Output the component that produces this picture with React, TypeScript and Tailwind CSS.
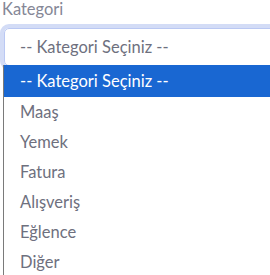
import React from "react";

const items = ["Maaş", "Yemek", "Fatura", "Alışveriş", "Eğlence", "Diğer"];

export default function App() {
  return (
    <div className="relative w-[270px] h-[275px] overflow-hidden bg-white font-['Lato',sans-serif]">
      <div className="pl-[2px] pt-[0px] text-[16.5px] leading-[18px] text-[#858796]">Kategori</div>
      <div className="ml-[4px] mt-[10px] h-[38px] w-[300px] rounded-[5px] border border-[#bac8f3] shadow-[0_0_0_4px_#d3dcf6] flex items-center pl-[15px] text-[16.5px] text-[#6e707e]">
        -- Kategori Seçiniz --
      </div>
      <div className="absolute left-[3px] top-[65px] w-[300px] border-l border-[#7a7a7a] bg-white">
        <div className="h-[32px] flex items-center pl-[16px] bg-[#1967d2] text-white text-[16.5px]">
          -- Kategori Seçiniz --
        </div>
        {items.map((it) => (
          <div key={it} className="h-[30px] flex items-center pl-[16px] text-[16.5px] text-[#6e707e]">
            {it}
          </div>
        ))}
      </div>
    </div>
  );
}
